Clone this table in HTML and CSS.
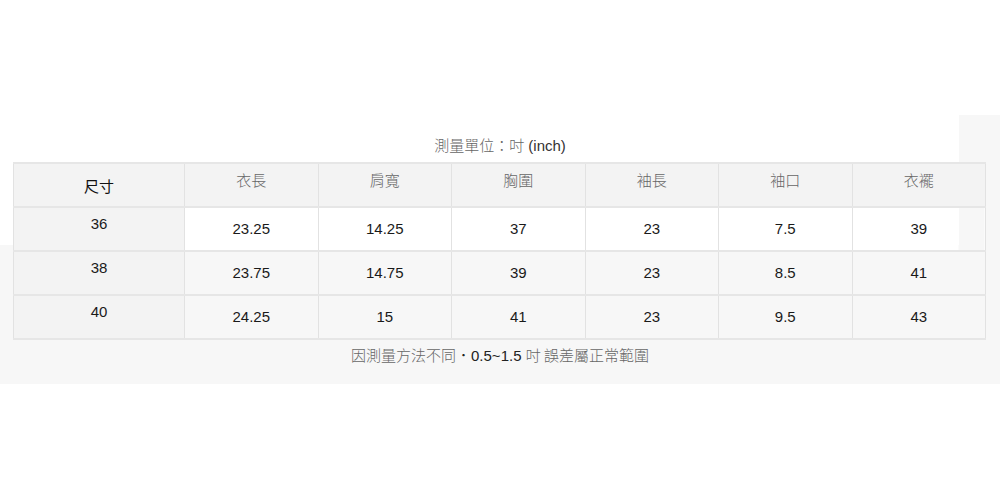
FILE: index.html
```html
<!DOCTYPE html>
<html lang="zh-Hant">
<head>
<meta charset="utf-8">
<title>尺寸表</title>
<link rel="stylesheet" href="styles.css">
</head>
<body>
<div class="page">
  <p class="title"><span class="cjk">測量單位：吋</span> (inch)</p>
  <table class="size-table">
    <colgroup>
      <col class="c-first">
      <col><col><col><col><col><col>
    </colgroup>
    <tr class="head">
      <td class="label main"><span class="cjk">尺寸</span></td>
      <td class="hcell"><span class="cjk">衣長</span></td>
      <td class="hcell"><span class="cjk">肩寬</span></td>
      <td class="hcell"><span class="cjk">胸圍</span></td>
      <td class="hcell"><span class="cjk">袖長</span></td>
      <td class="hcell"><span class="cjk">袖口</span></td>
      <td class="hcell"><span class="cjk">衣襬</span></td>
    </tr>
    <tr class="row-white">
      <td class="label">36</td>
      <td>23.25</td><td>14.25</td><td>37</td><td>23</td><td>7.5</td><td class="last">39</td>
    </tr>
    <tr>
      <td class="label">38</td>
      <td>23.75</td><td>14.75</td><td>39</td><td>23</td><td>8.5</td><td>41</td>
    </tr>
    <tr>
      <td class="label">40</td>
      <td>24.25</td><td>15</td><td>41</td><td>23</td><td>9.5</td><td>43</td>
    </tr>
  </table>
  <p class="note"><span class="cjk">因測量方法不同</span>．0.5~1.5 <span class="cjk">吋 誤差屬正常範圍</span></p>
</div>
</body>
</html>
```
FILE: styles.css
```css
html, body {
  margin: 0;
  padding: 0;
}
body {
  width: 1000px;
  height: 500px;
  font-family: "Liberation Sans", Arial, "Noto Sans CJK TC", sans-serif;
  color: #222;
  background:
    linear-gradient(#f7f7f7, #f7f7f7) no-repeat 959px 115px / 41px 130px,
    linear-gradient(#f7f7f7, #f7f7f7) no-repeat 0 245px / 100% 139px,
    #ffffff;
}
.page {
  padding-top: 135px;
  display: flex;
  flex-direction: column;
  align-items: center;
}
.cjk {
  font-family: "Noto Sans CJK TC", sans-serif;
  color: #666;
  font-weight: 300;
}
.title {
  margin: 0 0 6px;
  font-size: 15px;
  line-height: 20px;
  text-align: center;
  color: #333;
}
.size-table {
  width: 973px;
  align-self: flex-start;
  margin-left: 13px;
  border-collapse: collapse;
  table-layout: fixed;
  font-size: 15px;
  line-height: 18px;
}
.c-first {
  width: 171px;
}
.size-table td {
  box-sizing: border-box;
  border-left: 1px solid #e2e2e2;
  border-right: 1px solid #e2e2e2;
  border-top: 2px solid #e6e6e6;
  border-bottom: 2px solid #e6e6e6;
  height: 44px;
  padding: 0;
  text-align: center;
  vertical-align: middle;
  color: #1a1a1a;
}
.size-table .head td {
  background: #f3f3f3;
}
.size-table td.hcell {
  vertical-align: top;
  padding-top: 7px;
}
.size-table td.label {
  background: #f3f3f3;
  vertical-align: top;
  padding-top: 7px;
}
.size-table td.label.main {
  vertical-align: middle;
  padding-top: 2px;
}
.size-table td.label.main .cjk {
  color: #111;
  font-weight: 400;
}
.row-white td {
  background: #ffffff;
}
.row-white td.last {
  background: linear-gradient(to right, #ffffff 106px, transparent 106px);
}
.note {
  margin: 5px 0 0;
  font-size: 15px;
  line-height: 20px;
  text-align: center;
  color: #222;
}
```
